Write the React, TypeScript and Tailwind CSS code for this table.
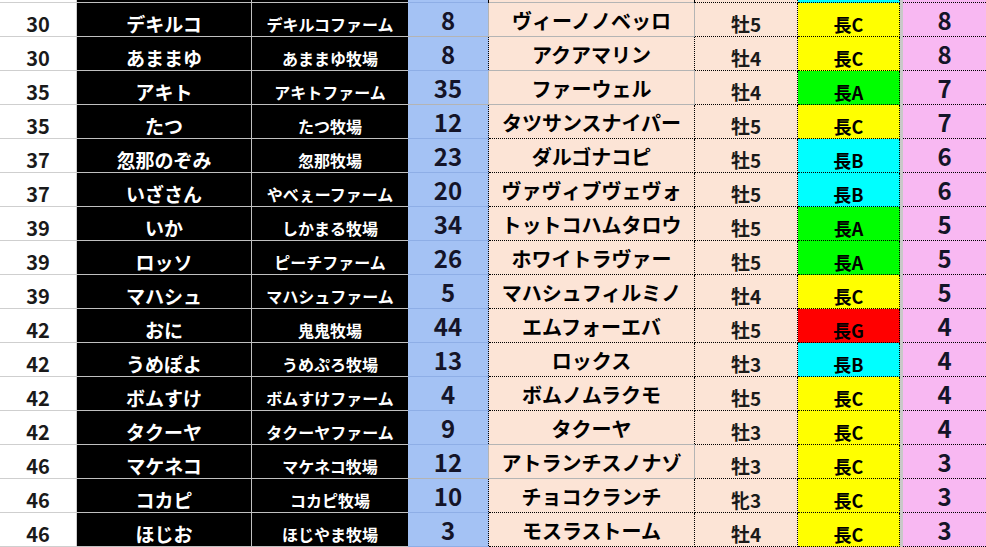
import clsx from 'clsx'

const cn = clsx

type Row = [number, string, string, number, string, string, 'A' | 'B' | 'C' | 'G', number]

const rows: Row[] = [
  [30, 'デキルコ', 'デキルコファーム', 8, 'ヴィーノノベッロ', '牡5', 'C', 8],
  [30, 'あままゆ', 'あままゆ牧場', 8, 'アクアマリン', '牡4', 'C', 8],
  [35, 'アキト', 'アキトファーム', 35, 'ファーウェル', '牡4', 'A', 7],
  [35, 'たつ', 'たつ牧場', 12, 'タツサンスナイパー', '牡5', 'C', 7],
  [37, '忽那のぞみ', '忽那牧場', 23, 'ダルゴナコピ', '牡5', 'B', 6],
  [37, 'いざさん', 'やべぇーファーム', 20, 'ヴァヴィブヴェヴォ', '牡5', 'B', 6],
  [39, 'いか', 'しかまる牧場', 34, 'トットコハムタロウ', '牡5', 'A', 5],
  [39, 'ロッソ', 'ピーチファーム', 26, 'ホワイトラヴァー', '牡5', 'A', 5],
  [39, 'マハシュ', 'マハシュファーム', 5, 'マハシュフィルミノ', '牡4', 'C', 5],
  [42, 'おに', '鬼鬼牧場', 44, 'エムフォーエバ', '牡5', 'G', 4],
  [42, 'うめぽよ', 'うめぷろ牧場', 13, 'ロックス', '牡3', 'B', 4],
  [42, 'ボムすけ', 'ボムすけファーム', 4, 'ボムノムラクモ', '牡5', 'C', 4],
  [42, 'タクーヤ', 'タクーヤファーム', 9, 'タクーヤ', '牡3', 'C', 4],
  [46, 'マケネコ', 'マケネコ牧場', 12, 'アトランチスノナゾ', '牡3', 'C', 3],
  [46, 'コカピ', 'コカピ牧場', 10, 'チョコクランチ', '牝3', 'C', 3],
  [46, 'ほじお', 'ほじやま牧場', 3, 'モスラストーム', '牡4', 'C', 3],
]

// rows whose horse-name cell keeps the plain grey grid instead of dotted lines
const plainRows = [0, 2, 13]

const rankBg = {
  A: 'bg-[#00ff00]',
  B: 'bg-[#00ffff]',
  C: 'bg-[#ffff00]',
  G: 'bg-[#ff0000]',
}

const grid = 'grid grid-cols-[77px_175px_156px_81px_206px_103px_102px_3px_1fr]'
const inner = 'h-full flex items-center justify-center leading-none font-bold overflow-hidden whitespace-nowrap'

// solid grid lines are drawn as a 1px strip of the wrapper's background
function TableRow({ row, index }: { row: Row; index: number }) {
  const [rank, owner, farm, no, horse, sex, grade, pts] = row
  const plain = plainRows.includes(index)
  const greyBottom = plain || plainRows.includes(index + 1)
  return (
    <div className={cn(grid, 'h-[34px] grid-rows-[34px]')}>
      <div className="bg-[#cfcfcf] pr-px pb-px">
        <div className={cn(inner, 'pt-2 bg-white text-[20px] text-[#1a1a1a]')}>{rank}</div>
      </div>
      <div className="bg-[#c0c0c0] pr-px pb-px">
        <div className={cn(inner, 'pt-2 bg-black text-[19px] text-white')}>{owner}</div>
      </div>
      <div className="bg-[#c0c0c0] pb-px">
        <div className={cn(inner, 'pt-2 bg-black text-[16px] text-white')}>{farm}</div>
      </div>
      <div className={cn('pb-px', plain ? 'bg-[#b4b4b4] pr-px' : 'bg-[#8eaee6]')}>
        <div
          className={cn(
            inner,
            'bg-[#a4c2f4] text-[24px] text-[#141428]',
            !plain && 'border-r border-dotted border-black'
          )}
        >
          {no}
        </div>
      </div>
      <div className={cn('bg-[#b4b4b4]', greyBottom && 'pb-px', plain && 'pr-px')}>
        <div
          className={cn(
            inner,
            'pt-0.5 bg-[#fce4d6] text-[20px] text-black border-dotted border-black',
            !plain && 'border-r',
            !greyBottom && 'border-b'
          )}
        >
          {horse}
        </div>
      </div>
      <div className={cn(inner, 'pt-2 bg-[#fce4d6] border-r border-b border-dotted border-black text-[19px] text-[#1a1a1a]')}>
        {sex}
      </div>
      <div className={cn(inner, 'pt-2 border-r border-b border-dotted border-black text-[18px] text-black', rankBg[grade])}>
        長{grade}
      </div>
      <div className="bg-[#c8c8c8]" />
      <div className={cn(inner, 'bg-[#f8b8f2] border-b border-dotted border-black text-[24px] text-[#141428]')}>
        {pts}
      </div>
    </div>
  )
}

export default function App() {
  return (
    <div
      className="w-[986px] h-[547px] overflow-hidden bg-white"
      style={{ fontFamily: '"Noto Sans CJK JP", "Noto Sans", sans-serif' }}
    >
      {/* sliver of the row above */}
      <div className={cn(grid, 'h-[3px] grid-rows-[3px]')}>
        <div className="bg-[#cfcfcf] pr-px pb-px"><div className="h-full bg-white" /></div>
        <div className="bg-[#c0c0c0] pr-px pb-px"><div className="h-full bg-black" /></div>
        <div className="bg-[#c0c0c0] pb-px"><div className="h-full bg-black" /></div>
        <div className="bg-[#8eaee6] pb-px">
          <div className="h-full bg-[#a4c2f4] border-r border-dotted border-black" />
        </div>
        <div className="bg-[#b4b4b4] pb-px">
          <div className="h-full bg-[#fce4d6] border-r border-dotted border-black" />
        </div>
        <div className="bg-[#fce4d6] border-r border-b border-dotted border-black" />
        <div className="bg-[#00ffff] border-r border-b border-dotted border-black" />
        <div className="bg-[#c8c8c8]" />
        <div className="bg-[#f8b8f2] border-b border-dotted border-black" />
      </div>
      {rows.map((row, i) => (
        <TableRow key={i} row={row} index={i} />
      ))}
    </div>
  )
}
